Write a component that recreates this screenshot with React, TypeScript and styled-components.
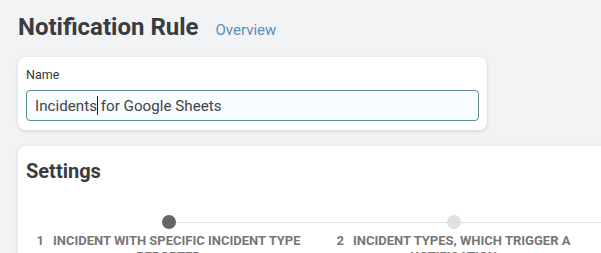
import React from "react";
import styled, { createGlobalStyle } from "styled-components";

const Global = createGlobalStyle`
  html, body { margin: 0; padding: 0; overflow: hidden; }
  body {
    background: #f2f3f5;
    font-family: Roboto, "Liberation Sans", sans-serif;
    color: #3a3d42;
  }
`;

const Page = styled.div`
  padding: 13px 0 0 18px;
  width: 1000px;
`;

const Header = styled.div`
  display: flex;
  align-items: baseline;
`;

const Title = styled.h1`
  margin: 0;
  font-size: 24px;
  line-height: 29px;
  font-weight: 700;
  color: #393c41;
`;

const HeaderLink = styled.a`
  margin-left: 17px;
  font-size: 15px;
  color: #5a8db8;
  text-decoration: none;
`;

const Card = styled.section<{ $width: number }>`
  width: ${(p) => p.$width}px;
  box-sizing: border-box;
  background: #fff;
  border-radius: 8px;
  box-shadow: 0 1px 4px rgba(0, 0, 0, 0.13);
`;

const NameCard = styled(Card)`
  margin-top: 15px;
  padding: 10px 8px 9px;
`;

const FieldLabel = styled.label`
  display: block;
  font-size: 12.5px;
  line-height: 16px;
  color: #35383d;
  margin-bottom: 7px;
`;

const TextField = styled.div`
  height: 31px;
  box-sizing: border-box;
  border: 1px solid #5d8c8a;
  border-radius: 4px;
  background: #f7fcfe;
  padding: 0 8px;
  display: flex;
  align-items: center;
  font-size: 15.2px;
  color: #444;
  white-space: pre;
`;

const Caret = styled.span`
  display: inline-block;
  width: 1px;
  height: 19px;
  background: #222;
  margin-right: -1px;
`;

const SettingsCard = styled(Card)`
  margin-top: 16px;
  padding: 13px 8px 20px;
  min-height: 200px;
`;

const SectionTitle = styled.h2`
  margin: 0;
  font-size: 20px;
  line-height: 24px;
  font-weight: 700;
  color: #393c41;
`;

const Stepper = styled.div`
  display: flex;
  margin-top: 32px;
`;

const Step = styled.div`
  width: 285px;
  display: flex;
  flex-direction: column;
  align-items: center;
`;

const Track = styled.div<{ $first: boolean; $last: boolean }>`
  position: relative;
  width: 100%;
  height: 14px;
  display: flex;
  justify-content: center;
  &::before {
    content: "";
    position: absolute;
    top: 7px;
    left: ${(p) => (p.$first ? "50%" : "0")};
    right: ${(p) => (p.$last ? "50%" : "0")};
    height: 1px;
    background: #e2e2e2;
  }
`;

const Dot = styled.div<{ $active: boolean }>`
  position: relative;
  width: 14px;
  height: 14px;
  border-radius: 50%;
  background: ${(p) => (p.$active ? "#666" : "#e0e0e0")};
`;

const StepLabel = styled.div`
  margin-top: 4px;
  padding: 0 8px;
  text-align: center;
  font-size: 13px;
  line-height: 16px;
  font-weight: 700;
  text-transform: uppercase;
  color: #777;
`;

const StepNum = styled.span`
  margin-right: 9px;
`;

const steps = [
  "Incident with specific incident type reported",
  "Incident types, which trigger a notification",
  "Recipients",
];

export default function App() {
  return (
    <>
      <Global />
      <Page>
        <Header>
          <Title>Notification Rule</Title>
          <HeaderLink href="#">Overview</HeaderLink>
        </Header>
        <NameCard $width={469}>
          <FieldLabel>Name</FieldLabel>
          <TextField>
            Incidents<Caret /> for Google Sheets
          </TextField>
        </NameCard>
        <SettingsCard $width={900}>
          <SectionTitle>Settings</SectionTitle>
          <Stepper>
            {steps.map((s, i) => (
              <Step key={s}>
                <Track $first={i === 0} $last={i === steps.length - 1}>
                  <Dot $active={i === 0} />
                </Track>
                <StepLabel>
                  <StepNum>{i + 1}</StepNum>
                  {s}
                </StepLabel>
              </Step>
            ))}
          </Stepper>
        </SettingsCard>
      </Page>
    </>
  );
}
